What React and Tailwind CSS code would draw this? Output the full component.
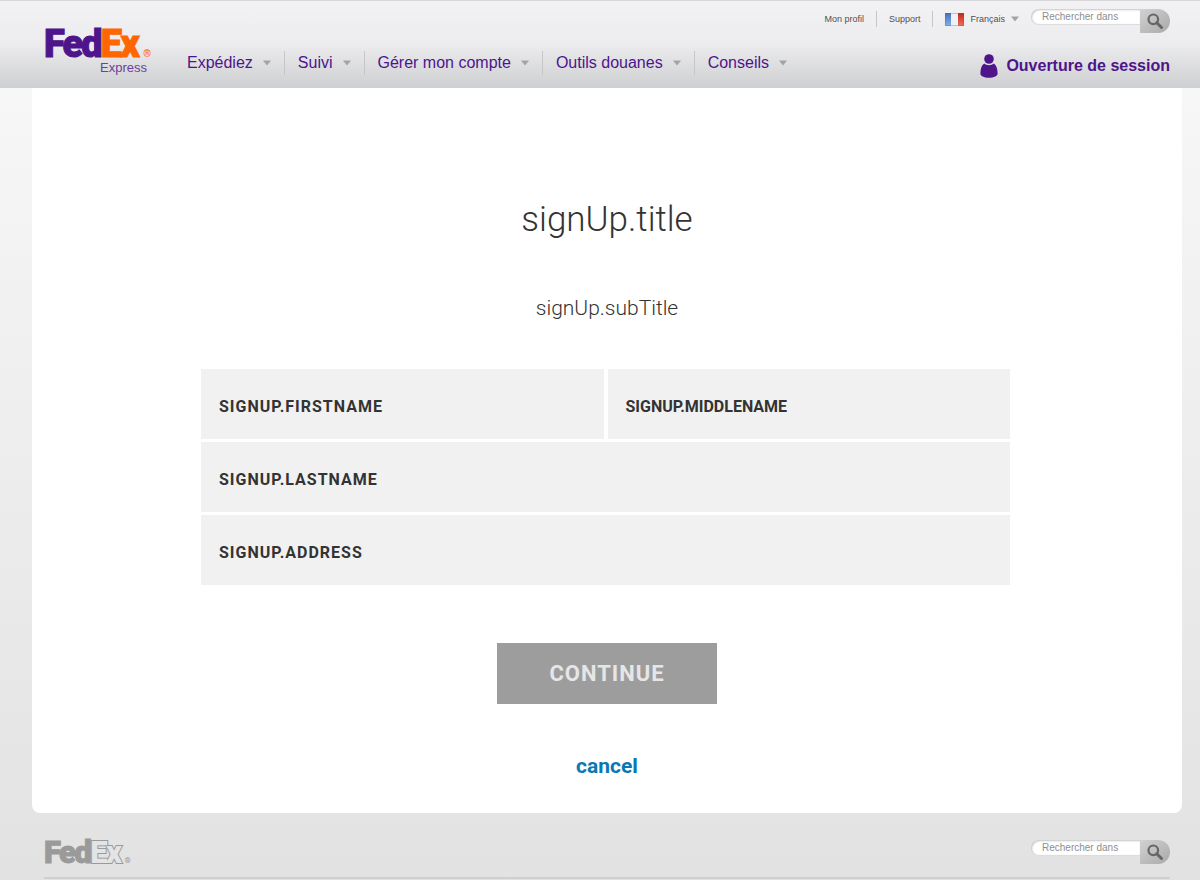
import { useState } from 'react';

const NAV_ITEMS = ['Expédiez', 'Suivi', 'Gérer mon compte', 'Outils douanes', 'Conseils'];

const FIELDS = [
  { id: 'firstName', label: 'signUp.firstName', wide: false, spaced: true },
  { id: 'middleName', label: 'signUp.middleName', wide: false, spaced: false },
  { id: 'lastName', label: 'signUp.lastName', wide: true, spaced: true },
  { id: 'address', label: 'signUp.address', wide: true, spaced: true },
];

function Caret() {
  return (
    <svg width="8" height="6" viewBox="0 0 8 6" className="shrink-0" aria-hidden="true">
      <path d="M0 0.5h8L4 5.5z" fill="#a3a3a6" />
    </svg>
  );
}

function FrenchFlag() {
  return (
    <svg width="19" height="13" viewBox="0 0 19 13" className="shrink-0" aria-hidden="true">
      <defs>
        <linearGradient id="flagBlue" x1="0" y1="0" x2="0" y2="1">
          <stop offset="0" stopColor="#4a6fb8" />
          <stop offset="1" stopColor="#7fb0ee" />
        </linearGradient>
        <linearGradient id="flagRed" x1="0" y1="0" x2="0" y2="1">
          <stop offset="0" stopColor="#c0281c" />
          <stop offset="1" stopColor="#f0705a" />
        </linearGradient>
      </defs>
      <rect width="7" height="13" fill="url(#flagBlue)" />
      <rect x="6" width="7" height="13" fill="#eef1f7" />
      <rect x="13" width="6" height="13" fill="url(#flagRed)" />
      <rect x="0.5" y="0.5" width="18" height="12" fill="none" stroke="#5a5a6a" strokeOpacity="0.3" />
    </svg>
  );
}

function UserIcon() {
  return (
    <svg width="18" height="24" viewBox="0 0 18 24" className="shrink-0" aria-hidden="true" fill="#4d148c">
      <circle cx="9" cy="5" r="4.8" />
      <path d="M4.2 9.6C5.4 10.7 7.100 11.300 9 11.300s3.600-.6 4.800-1.700c2.500 1.500 3.800 5.300 3.800 10 0 2.600-3.600 4.200-8.600 4.200S.4 22.200.4 19.600c0-4.700 1.300-8.500 3.800-10z" />
    </svg>
  );
}

function SearchBox({ id }) {
  const [query, setQuery] = useState('');

  return (
    <form role="search" onSubmit={(event) => event.preventDefault()} className="flex items-start">
      <input
        id={id}
        type="search"
        aria-label="Rechercher dans"
        placeholder="Rechercher dans"
        value={query}
        onChange={(event) => setQuery(event.target.value)}
        className="h-4 w-[109px] appearance-none rounded-l-full bg-white pl-[11px] font-['Liberation_Sans',Arial,sans-serif] text-[10px] leading-4 text-[#555] shadow-[inset_1px_1px_2px_#c4c4c6,inset_0_-1px_1px_#dcdcde] outline-none placeholder:text-[#8e8e8e] placeholder:opacity-100"
      />
      <button
        type="submit"
        aria-label="Rechercher"
        className="flex h-6 w-[30px] items-center justify-center rounded-r-full bg-linear-to-br from-[#d2d2d2] to-[#a9a9a9]"
      >
        <svg width="16" height="16" viewBox="0 0 16 16" fill="none" stroke="#666" aria-hidden="true">
          <circle cx="6.3" cy="6.3" r="4.8" strokeWidth="2.2" />
          <path d="M9.8 9.8l4.7 4.7" strokeWidth="3" strokeLinecap="round" />
        </svg>
      </button>
    </form>
  );
}

function Header() {
  return (
    <header className="flex h-[88px] items-start border-t border-[#d6d6d9] bg-linear-to-b from-[#f2f2f4] via-[#ececee] via-50% to-[#cecfd1] pr-[30px] pl-11">
      <a href="#accueil" className="mt-7 flex w-[107px] shrink-0 flex-col">
        <span className="flex items-end justify-between font-[Roboto,sans-serif] font-black">
          <span className="text-[38px] leading-[30px] tracking-tighter text-[#4d148c] [-webkit-text-stroke:1px_currentColor]">
            Fed<span className="text-[#ff6600]">Ex</span>
          </span>
          <span className="text-[10px] leading-[10px] font-bold text-[#ff6600]">®</span>
        </span>
        <span className="mr-1 self-end text-[13px] leading-[18px] text-[#6b3fa0]">Express</span>
      </a>

      <nav className="mt-[50px] ml-9 flex grow items-center">
        {NAV_ITEMS.map((item, index) => (
          <button
            key={item}
            type="button"
            className={`flex h-6 items-center gap-[10px] text-[16px] whitespace-nowrap text-[#4d148c] ${
              index > 0 ? 'ml-[13px] border-l border-[#c6c6ca] pl-[13px]' : ''
            }`}
          >
            {item}
            <Caret />
          </button>
        ))}
      </nav>

      <div className="flex shrink-0 flex-col items-end">
        <div className="mt-2 flex items-start">
          <div className="flex items-center pt-[2px] text-[9px] leading-4 text-[#505052]">
            <a href="#profil" className="pr-3">Mon profil</a>
            <a href="#support" className="border-l border-[#c6c6ca] px-3">Support</a>
            <button type="button" className="flex items-center gap-[6px] border-l border-[#c6c6ca] px-3">
              <FrenchFlag />
              Français
              <Caret />
            </button>
          </div>
          <SearchBox id="header-search" />
        </div>
        <a href="#session" className="mt-[21px] flex items-center gap-2 text-[16px] font-bold text-[#4d148c]">
          <UserIcon />
          Ouverture de session
        </a>
      </div>
    </header>
  );
}

function Field({ field, value, onChange }) {
  return (
    <div className={`relative ${field.wide ? 'col-span-2' : ''}`}>
      <input
        id={field.id}
        type="text"
        value={value}
        onChange={(event) => onChange(field.id, event.target.value)}
        className="peer block h-[70px] w-full bg-[#f1f1f1] px-[18px] pt-6 text-[16px] text-[#333] outline-none"
      />
      <label
        htmlFor={field.id}
        className={`pointer-events-none absolute top-[26px] left-[18px] text-[16px] leading-6 font-bold text-[#333] uppercase peer-focus:top-2 ${
          field.spaced ? 'tracking-[1px]' : ''
        }`}
      >
        {field.label}
      </label>
    </div>
  );
}

function SignUpForm() {
  const [values, setValues] = useState({ firstName: '', middleName: '', lastName: '', address: '' });

  const handleChange = (id, value) => {
    setValues((current) => ({ ...current, [id]: value }));
  };

  return (
    <form
      onSubmit={(event) => event.preventDefault()}
      className="flex flex-col items-center font-[Roboto,sans-serif] text-[#333]"
    >
      <h1 className="text-[35px] leading-[44px] font-light">signUp.title</h1>
      <p className="mt-[52px] text-[21px] leading-7 font-light">signUp.subTitle</p>
      <div className="mt-[47px] grid w-full max-w-[812px] grid-cols-2 gap-x-1 gap-y-[3px] pr-[3px]">
        {FIELDS.map((field) => (
          <Field key={field.id} field={field} value={values[field.id]} onChange={handleChange} />
        ))}
      </div>
      <button
        type="submit"
        className="mt-[58px] h-[61px] w-[220px] bg-[#9d9d9d] text-[22px] font-bold tracking-[1px] text-[#e6e6e6] uppercase"
      >
        Continue
      </button>
      <a href="#annuler" className="mt-12 text-[21px] leading-7 font-bold text-[#0a78b4]">cancel</a>
    </form>
  );
}

function Footer() {
  return (
    <footer className="mr-[30px] ml-11 flex items-start justify-between border-b-2 border-[#cfcfcf] pt-[27px] pb-3">
      <a href="#accueil" className="flex items-end gap-1 font-[Roboto,sans-serif] font-black text-[#9a9a9a]">
        <span className="text-[31px] leading-[25px] tracking-tighter [-webkit-text-stroke:1px_#9a9a9a]">
          Fed<span className="text-[#e4e4e4] [-webkit-text-stroke:2px_#9a9a9a] [paint-order:stroke_fill]">Ex</span>
        </span>
        <span className="text-[8px] leading-2">®</span>
      </a>
      <SearchBox id="footer-search" />
    </footer>
  );
}

export default function App() {
  return (
    <div className="min-h-screen bg-linear-to-b from-[#f9f9f9] to-[#e2e2e2] font-['Liberation_Sans',Arial,sans-serif]">
      <Header />
      <main className="mr-[18px] ml-8 rounded-b-lg bg-white px-8 pt-[110px] pb-[33px]">
        <SignUpForm />
      </main>
      <Footer />
    </div>
  );
}
